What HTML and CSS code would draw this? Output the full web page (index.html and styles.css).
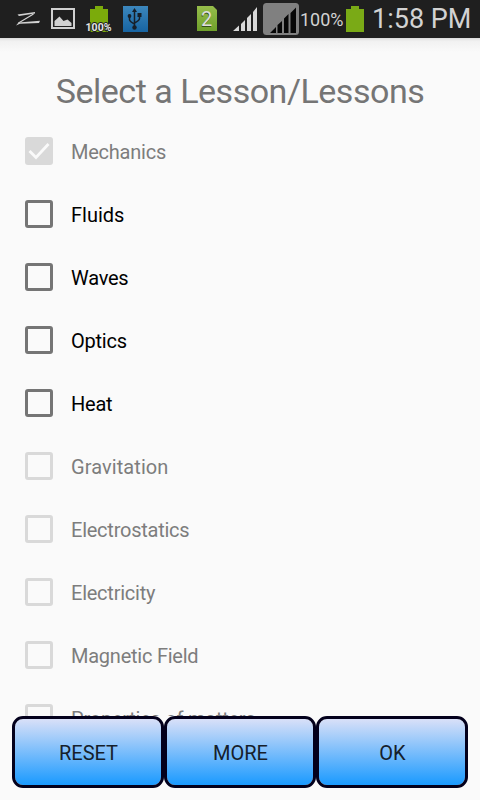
FILE: index.html
```html
<!DOCTYPE html>
<html lang="en">
<head>
<meta charset="utf-8">
<title>Select a Lesson</title>
<link rel="stylesheet" href="styles.css">
</head>
<body>
<header class="status">
  <svg class="icons" width="158" height="38" viewBox="0 0 158 38">
    <path d="M33.500 14 18.500 23" fill="none" stroke="#d2d2d2" stroke-width="1.100"/>
    <path d="M17.500 14.500 35 12V13.500L19 16ZM16 25.500 18.500 22.500 40 20.800 39 23 20 23.800Z" fill="#d2d2d2"/>
    <path d="M52 9h22v19H52z" fill="none" stroke="#d0d0d0" stroke-width="2"/>
    <path d="M54.500 26v-5l5-4.500 4 4.500 4-1.500 4 3.500v3z" fill="#d0d0d0"/>
    <path d="M95 6h8v3h5v23H90V9h5z" fill="#7bab0b"/>
    <text x="98.500" y="31" class="battery-label">100%</text>
    <path d="M123 6h25v26h-25z" fill="url(#usb)"/>
    <g fill="none" stroke="#17202a" stroke-width="1.500">
      <path d="M134.500 28V11M129.500 16v3.500q0 2 5 4.500M139.500 15v3.500q0 2-5 4.500"/>
    </g>
    <path d="m134.500 8 2.500 4h-5z" fill="#17202a"/>
    <circle cx="134.500" cy="27.500" r="2.200" fill="#17202a"/>
    <circle cx="129.500" cy="16" r="1.900" fill="#17202a"/>
    <path d="M137.500 13h4v4h-4z" fill="#17202a"/>
    <defs><linearGradient id="usb" x2="0" y2="1"><stop stop-color="#3c87bd"/><stop offset="1" stop-color="#1764a2"/></linearGradient></defs>
  </svg>
  <svg class="signals" width="105" height="38" viewBox="195 0 105 38">
    <path d="M197 6h16l4 4v21h-20z" fill="url(#sim)"/>
    <text x="206" y="27" class="sim-shadow">2</text>
    <text x="206.500" y="26" class="sim-label">2</text>
    <path d="M233 31l6-5.500V31zM241 24l4-4v11h-4zM247 18l4-4v17h-4zM253 12l4-5v24h-4z" fill="#d8d8d8"/>
    <rect x="263" y="3" width="36" height="32" rx="3.500" fill="#808080"/>
    <path d="M269 33l6-6v6zM276.500 25l4.500-4v12h-4.500zM283 18.500l4.500-4.500v19H283zM289.500 13l5.500-5.500V33h-5.500z" fill="#070707" transform="translate(1 0)"/>
    <defs><linearGradient id="sim" x2="0" y2="1"><stop stop-color="#96bd4b"/><stop offset="1" stop-color="#6fa02b"/></linearGradient></defs>
  </svg>
  <span class="percent">100%</span>
  <svg class="battery" width="18" height="38" viewBox="0 0 18 38"><path d="M5 6h8v3h5v23H0V9h5z" fill="#7aaa16"/></svg>
  <span class="time">1:58 PM</span>
</header>
<main>
  <h1>Select a Lesson/Lessons</h1>
  <ul class="lessons">
    <li class="off"><i class="box checked"><svg width="28" height="28" viewBox="0 0 28 28"><path d="m4.500 14 6.500 6.500L23.500 7" fill="none" stroke="#fafafa" stroke-width="2.800"/></svg></i><span>Mechanics</span></li>
    <li><i class="box"></i><span>Fluids</span></li>
    <li><i class="box"></i><span>Waves</span></li>
    <li><i class="box"></i><span>Optics</span></li>
    <li><i class="box"></i><span>Heat</span></li>
    <li class="off"><i class="box"></i><span class="wide">Gravitation</span></li>
    <li class="off"><i class="box"></i><span>Electrostatics</span></li>
    <li class="off"><i class="box"></i><span>Electricity</span></li>
    <li class="off"><i class="box"></i><span>Magnetic Field</span></li>
    <li class="off"><i class="box"></i><span>Properties of matters</span></li>
  </ul>
</main>
<footer class="actions">
  <button>RESET</button><button>MORE</button><button>OK</button>
</footer>
</body>
</html>
```
FILE: styles.css
```css
* { box-sizing: border-box; }
body {
  margin: 0;
  width: 480px;
  height: 800px;
  overflow: hidden;
  display: flex;
  flex-direction: column;
  background: #fafafa;
  font-family: Roboto, "Liberation Sans", sans-serif;
}
.status {
  flex: none;
  display: flex;
  height: 38px;
  background: #1f1f1f;
  color: #d2d2d2;
  line-height: 38px;
  white-space: nowrap;
}
.status svg { flex: none; display: block; }
.signals { margin-left: 37px; }
.percent { width: 46px; font-size: 18px; line-height: 40px; }
.time { margin-left: 8px; font-size: 27px; line-height: 39px; }
.battery-label { font: bold 10.5px Roboto, sans-serif; fill: #e4e4e4; stroke: #1f1f1f; stroke-width: 2px; paint-order: stroke; text-anchor: middle; }
.sim-label, .sim-shadow { font: 400 20px Roboto, sans-serif; text-anchor: middle; fill: #dedede; }
.sim-shadow { fill: #36501c; }
main {
  flex: none;
  height: 678px;
  overflow: hidden;
  background: linear-gradient(#d9d9d9, #f1f1f1 3px, #fafafa 14px);
}
h1 {
  margin: 0;
  padding-top: 32px;
  height: 82px;
  font-size: 34px;
  line-height: 42px;
  font-weight: 400;
  letter-spacing: -.48px;
  text-align: center;
  color: #757575;
  white-space: nowrap;
}
.lessons { margin: 0; padding: 0; list-style: none; }
.lessons li {
  height: 63px;
  padding: 0 0 1px 25px;
  display: flex;
  align-items: center;
  gap: 18px;
  font-size: 20px;
  color: #000;
  letter-spacing: -.24px;
}
.lessons li:nth-child(2) { letter-spacing: 0; }
.lessons .wide { letter-spacing: .08px; }
.lessons span { padding-top: 2px; }
.lessons .off { color: #7d7d7d; }
.box { width: 28px; height: 28px; border: 3px solid #757575; border-radius: 3px; }
.off .box { border-color: #d9d9d9; }
.box.checked { border: 0; background: #d9d9d9; }
.box svg { display: block; }
.actions { display: flex; height: 72px; padding: 0 12px; }
button {
  flex: 1;
  padding: 2px 0 0 1px;
  border: 3px solid #03001c;
  border-radius: 11px;
  background: linear-gradient(#d9e0f8, #1a9aff) padding-box;
  color: #15202b;
  font: 20px Roboto, sans-serif;
}
```
